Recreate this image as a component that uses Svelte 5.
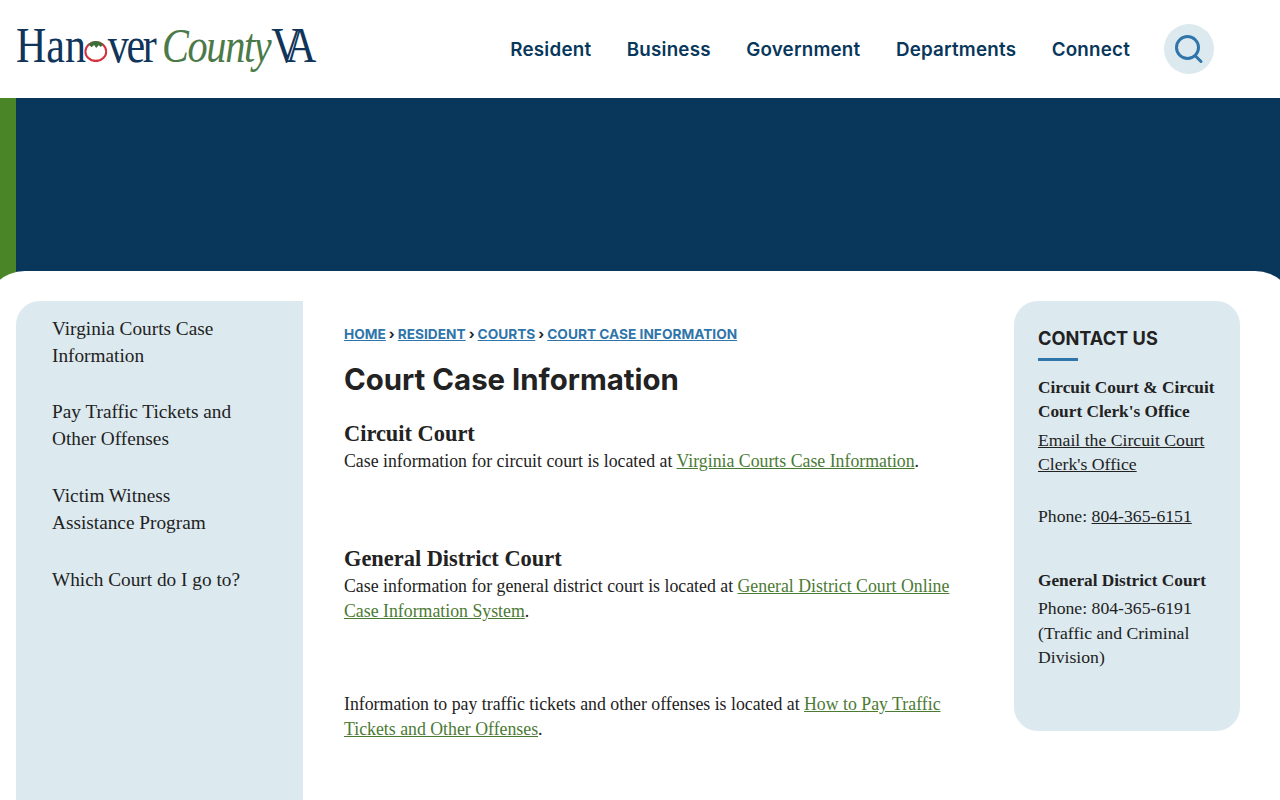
<script lang="ts">
  const navItems = ["Resident", "Business", "Government", "Departments", "Connect"];
  const sideItems = [
    "Virginia Courts Case Information",
    "Pay Traffic Tickets and Other Offenses",
    "Victim Witness Assistance Program",
    "Which Court do I go to?"
  ];
  const crumbs = ["Home", "Resident", "Courts", "Court Case Information"];
</script>

<div class="page">
  <header class="top">
    <a class="logo" href="#home">
      <span class="logo-dark">Han</span><svg class="tomato" width="28" height="22" viewBox="0 0 28 22" preserveAspectRatio="none" aria-hidden="true">
        <ellipse cx="14" cy="11.5" rx="12.4" ry="9.4" fill="none" stroke="#d4313c" stroke-width="2.4" />
        <path d="M5 4 Q14 -2 23 4 L20 7 L17.5 5.2 L14.5 8 L12 5 L9 7.2 Z" fill="#3c6e3a" />
      </svg><span class="logo-dark ver">ver</span>
      <span class="logo-green">County</span>
      <span class="logo-dark va">VA</span>
    </a>
    <nav class="nav">
      {#each navItems as item}
        <a href="#nav">{item}</a>
      {/each}
      <button class="search" aria-label="Search">
        <svg width="30" height="30" viewBox="0 0 30 30" fill="none" stroke="#2f75aa" stroke-width="3" stroke-linecap="round">
          <circle cx="13.5" cy="13.5" r="11" />
          <path d="M21.5 22 L27 27.5" />
        </svg>
      </button>
    </nav>
  </header>

  <div class="hero"><div class="strip"></div><div class="band"></div></div>

  <main class="main">
    <aside class="side">
      {#each sideItems as item}
        <a href="#side">{item}</a>
      {/each}
    </aside>

    <section class="content">
      <div class="crumbs">
        {#each crumbs as crumb, i}
          {#if i > 0}<span class="sep">›</span>{/if}<a href="#crumb">{crumb}</a>
        {/each}
      </div>
      <h1>Court Case Information</h1>

      <h2>Circuit Court</h2>
      <p class="first">Case information for circuit court is located at <a href="#l">Virginia Courts Case Information</a>.</p>

      <h2 class="second">General District Court</h2>
      <p>Case information for general district court is located at <a href="#l">General District Court Online Case Information System</a>.</p>

      <p class="traffic">Information to pay traffic tickets and other offenses is located at <a href="#l">How to Pay Traffic Tickets and Other Offenses</a>.</p>
    </section>

    <aside class="contact">
      <h3>CONTACT US</h3>
      <div class="rule"></div>
      <strong class="office">Circuit Court &amp; Circuit Court Clerk's Office</strong>
      <a class="line" href="#mail">Email the Circuit Court Clerk's Office</a>
      <div class="phone">Phone: <a href="#tel">804-365-6151</a></div>
      <strong class="office gd">General District Court</strong>
      <div class="line gd-line">Phone: 804-365-6191<br />(Traffic and Criminal Division)</div>
    </aside>
  </main>
</div>

<style>
  :global(body) {
    margin: 0;
    background: #fff;
    overflow: hidden;
  }
  .page {
    height: 800px;
    overflow: hidden;
    font-family: "Liberation Serif", serif;
    color: #222;
  }
  .top {
    height: 98px;
    display: flex;
    align-items: center;
    justify-content: space-between;
    padding: 0 66px 0 16px;
    box-sizing: border-box;
    background: #fff;
  }
  .logo {
    display: flex;
    align-items: baseline;
    text-decoration: none;
    font-size: 50px;
    line-height: 1;
    margin-top: -9px;
    white-space: nowrap;
    transform: scaleX(0.84);
    transform-origin: left center;
  }
  .logo-dark {
    color: #10345a;
  }
  .tomato {
    margin: 0 0 4px -2px;
  }
  .ver {
    letter-spacing: -2.8px;
  }
  .logo-green {
    color: #4b7a48;
    font-style: italic;
    font-size: 48px;
    letter-spacing: -1.6px;
    margin-left: 9px;
  }
  .va {
    margin-left: 1px;
    letter-spacing: -12px;
  }
  .nav {
    display: flex;
    align-items: center;
  }
  .nav a {
    font-family: Inter, sans-serif;
    font-weight: 600;
    font-size: 18.8px;
    letter-spacing: 0.2px;
    color: #08375b;
    text-decoration: none;
    margin-right: 35.5px;
  }
  .search {
    width: 50px;
    height: 50px;
    border: 0;
    padding: 0;
    border-radius: 50%;
    background: #dce9ef;
    display: flex;
    align-items: center;
    justify-content: center;
    margin-left: -1.5px;
  }
  .hero {
    height: 203px;
    display: flex;
    background: #08375b;
  }
  .strip {
    width: 16px;
    background: #4a8528;
  }
  .band {
    flex: 1;
  }
  /* wider than the window by 15px a side, so the 40px corners get cut off */
  .main {
    position: relative;
    margin: -30px -15px 0;
    height: 600px;
    background: #fff;
    border-radius: 40px 40px 0 0;
    padding: 30px 55px 0 31px;
    box-sizing: border-box;
    display: grid;
    grid-template-columns: 287px 711px 226px;
    align-items: start;
  }
  .side {
    height: 570px;
    background: #dce9ef;
    border-radius: 24px 0 0 0;
    padding: 13.8px 50px 0 36px;
    box-sizing: border-box;
    display: flex;
    flex-direction: column;
    gap: 29.6px;
  }
  .side a {
    font-size: 19.3px;
    line-height: 27px;
    color: #222;
    text-decoration: none;
  }
  .content {
    padding: 23px 56px 0 41px;
    font-size: 17.8px;
    line-height: 25px;
  }
  .crumbs {
    font-family: Inter, sans-serif;
    font-size: 13.7px;
    font-weight: 700;
    line-height: 20px;
    text-transform: uppercase;
    white-space: nowrap;
  }
  .crumbs a {
    color: #2f75aa;
  }
  .sep {
    color: #222;
    margin: 0 3px;
  }
  h1 {
    margin: 16px 0 0;
    font-family: Inter, sans-serif;
    font-weight: 700;
    font-size: 29.4px;
    line-height: 40px;
    color: #222;
  }
  h2 {
    margin: 20px 0 0;
    font-size: 22.4px;
    line-height: 28px;
    font-weight: 700;
    color: #222;
  }
  .second {
    margin-top: 71px;
  }
  p {
    margin: 1px 0 0;
  }
  p a {
    color: #4b7a34;
  }
  .traffic {
    margin-top: 68px;
  }
  .contact {
    height: 430px;
    background: #dce9ef;
    border-radius: 24px;
    padding: 24px 16px 0 24px;
    box-sizing: border-box;
    font-size: 17.7px;
    line-height: 24.4px;
  }
  h3 {
    margin: 0;
    font-family: Inter, sans-serif;
    font-weight: 700;
    font-size: 18.2px;
    line-height: 26px;
    color: #222;
  }
  .rule {
    width: 40px;
    height: 3px;
    background: #2f75aa;
    margin: 7px 0 15px;
  }
  .office {
    display: block;
    font-size: 17.3px;
    font-weight: 700;
    line-height: 24px;
  }
  .contact a {
    color: #222;
  }
  .line {
    display: block;
    margin-top: 4px;
  }
  .gd-line {
    margin-top: 3px;
  }
  .phone {
    margin-top: 27px;
  }
  .gd {
    margin-top: 41px;
  }
</style>
